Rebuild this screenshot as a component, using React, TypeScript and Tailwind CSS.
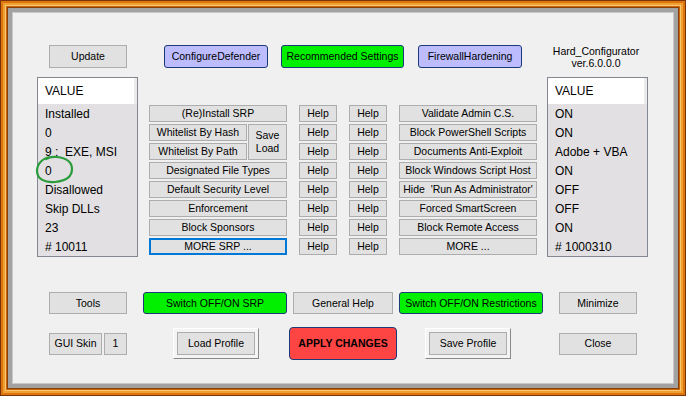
const ui = "font-['Liberation_Sans',Arial,sans-serif]";

type BtnProps = {
  label: string;
  className?: string;
  kind?: "gray" | "lav" | "green" | "red" | "focus";
};

const kinds = {
  gray: "border border-[#adadad] bg-[#e1e1e1]",
  focus: "border-2 border-[#0078d7] bg-[#e1e1e1]",
  lav: "border border-[#1c3a78] bg-[#bcbcff] rounded-[3px]",
  green: "border border-[#1c3a78] bg-[#00f000] rounded-[3px]",
  red: "border border-[#1c3a78] bg-[#ff4444] rounded-[4px] font-bold",
};

const Btn = ({ label, className = "", kind = "gray" }: BtnProps) => (
  <button
    className={`flex shrink-0 items-center justify-center whitespace-nowrap text-[10.5px] leading-none text-black ${kinds[kind]} ${className}`}
  >
    {label}
  </button>
);

const ProfileBtn = ({ label, className = "" }: { label: string; className?: string }) => (
  <div
    className={`flex h-[31px] w-[86px] shrink-0 border border-t-white border-l-white border-r-[#8a8a8a] border-b-[#8a8a8a] bg-[#f4f4f4] p-[3px] ${className}`}
  >
    <Btn label={label} className="h-full w-full" />
  </div>
);

const ValueList = ({ rows, className = "" }: { rows: string[]; className?: string }) => (
  <div
    className={`flex h-[180px] w-[101px] shrink-0 flex-col border border-[#828790] bg-[#e2e0e2] text-[12px] text-black ${className}`}
  >
    <div className="flex h-[26px] items-center border-r-[3px] border-[#ebebeb] bg-white pl-[7px]">
      VALUE
    </div>
    {rows.map((r, i) => (
      <div key={i} className="flex h-[19px] items-center whitespace-pre pl-[7px]">
        {r}
      </div>
    ))}
  </div>
);

const srpLeft = [
  "Validate Admin C.S.",
  "Block PowerShell Scripts",
  "Documents Anti-Exploit",
  "Block Windows Script Host",
  "Hide  'Run As Administrator'",
  "Forced SmartScreen",
  "Block Remote Access",
  "MORE ...",
];

const HelpCol = () => (
  <div className="flex w-[38px] flex-col gap-[2px]">
    {Array.from({ length: 8 }).map((_, i) => (
      <Btn key={i} label="Help" className="h-[17px] w-full" />
    ))}
  </div>
);

export default function App() {
  return (
    <div className={`h-[396px] w-[686px] border border-[#7a3406] ${ui}`}>
      <div className="h-full w-full border-2 border-[#dc7410]">
        <div className="h-full w-full border-2 border-[#f0a030]">
          <div className="h-full w-full border border-[#f8c870]">
            <div className="h-full w-full border border-[#c8640c]">
              <div className="h-full w-full border border-[#8a4008]">
                <div className="h-full w-full border-4 border-[#a2a2a2]">
                  <div className="h-full w-full border border-[#c8c8c8]">
                    <div className="relative flex h-full w-full flex-col bg-[#f0f0f0]">
                      {/* top buttons */}
                      <div className="mt-[32px] flex h-[23px] items-start">
                        <Btn label="Update" className="ml-[36px] h-[23px] w-[78px]" />
                        <Btn label="ConfigureDefender" kind="lav" className="ml-[37px] h-[23px] w-[104px]" />
                        <Btn label="Recommended Settings" kind="green" className="ml-[13px] h-[23px] w-[123px]" />
                        <Btn label="FirewallHardening" kind="lav" className="ml-[14px] h-[23px] w-[104px]" />
                        <div className="ml-[19px] flex w-[110px] flex-col items-center text-[10.5px] leading-[12px] text-black">
                          <span>Hard_Configurator</span>
                          <span>ver.6.0.0.0</span>
                        </div>
                      </div>

                      {/* lists + option buttons */}
                      <div className="mt-[9px] flex items-start">
                        <ValueList
                          className="ml-[24px]"
                          rows={["Installed", "0", "9 ;  EXE, MSI", "0", "Disallowed", "Skip DLLs", "23", "# 10011"]}
                        />
                        <div className="ml-[11px] mt-[28px] flex gap-[12px]">
                          <div className="flex w-[138px] flex-col gap-[2px]">
                            <Btn label="(Re)Install SRP" className="h-[17px] w-full" />
                            <div className="flex h-[36px] gap-[1px]">
                              <div className="flex w-[98px] flex-col gap-[2px]">
                                <Btn label="Whitelist By Hash" className="h-[17px] w-full" />
                                <Btn label="Whitelist By Path" className="h-[17px] w-full" />
                              </div>
                              <button className="flex w-[39px] flex-col items-center justify-center border border-[#adadad] bg-[#e1e1e1] text-[10.5px] leading-[13px] text-black">
                                <span>Save</span>
                                <span>Load</span>
                              </button>
                            </div>
                            <Btn label="Designated File Types" className="h-[17px] w-full" />
                            <Btn label="Default Security Level" className="h-[17px] w-full" />
                            <Btn label="Enforcement" className="h-[17px] w-full" />
                            <Btn label="Block Sponsors" className="h-[17px] w-full" />
                            <Btn label="MORE SRP ..." kind="focus" className="h-[17px] w-full" />
                          </div>
                          <HelpCol />
                          <HelpCol />
                          <div className="flex w-[138px] flex-col gap-[2px]">
                            {srpLeft.map((l) => (
                              <Btn key={l} label={l} className="h-[17px] w-full whitespace-pre" />
                            ))}
                          </div>
                        </div>
                        <ValueList
                          className="ml-[10px]"
                          rows={["ON", "ON", "Adobe + VBA", "ON", "OFF", "OFF", "ON", "# 1000310"]}
                        />
                      </div>

                      {/* bottom row 1 */}
                      <div className="mt-[35px] flex h-[22px]">
                        <Btn label="Tools" className="ml-[36px] h-[22px] w-[78px]" />
                        <Btn label="Switch OFF/ON SRP" kind="green" className="ml-[16px] h-[22px] w-[144px]" />
                        <Btn label="General Help" className="ml-[6px] h-[22px] w-[100px]" />
                        <Btn label="Switch OFF/ON Restrictions" kind="green" className="ml-[6px] h-[22px] w-[144px]" />
                        <Btn label="Minimize" className="ml-[16px] h-[22px] w-[78px]" />
                      </div>

                      {/* bottom row 2 */}
                      <div className="mt-[13px] flex h-[33px] items-center">
                        <Btn label="GUI Skin" className="ml-[36px] h-[22px] w-[53px]" />
                        <Btn label="1" className="ml-[2px] h-[22px] w-[23px]" />
                        <ProfileBtn label="Load Profile" className="ml-[46px]" />
                        <Btn label="APPLY CHANGES" kind="red" className="ml-[30px] h-[33px] w-[108px]" />
                        <ProfileBtn label="Save Profile" className="ml-[28px]" />
                        <Btn label="Close" className="ml-[48px] h-[22px] w-[78px]" />
                      </div>

                      {/* hand-drawn mark around the fourth value */}
                      <svg
                        className="pointer-events-none absolute left-[22px] top-[141px]"
                        width="40"
                        height="31"
                        viewBox="0 0 40 31"
                        fill="none"
                      >
                        <path
                          d="M17 3 C9 3 2 9 2 17 C2 25 10 29 20 28 C30 27 37 23 37 15 C37 8 31 4 22 3 C18 2.5 14 3 11 5"
                          stroke="#2a9c3c"
                          strokeWidth="2.2"
                          strokeLinecap="round"
                        />
                      </svg>
                    </div>
                  </div>
                </div>
              </div>
            </div>
          </div>
        </div>
      </div>
    </div>
  );
}
